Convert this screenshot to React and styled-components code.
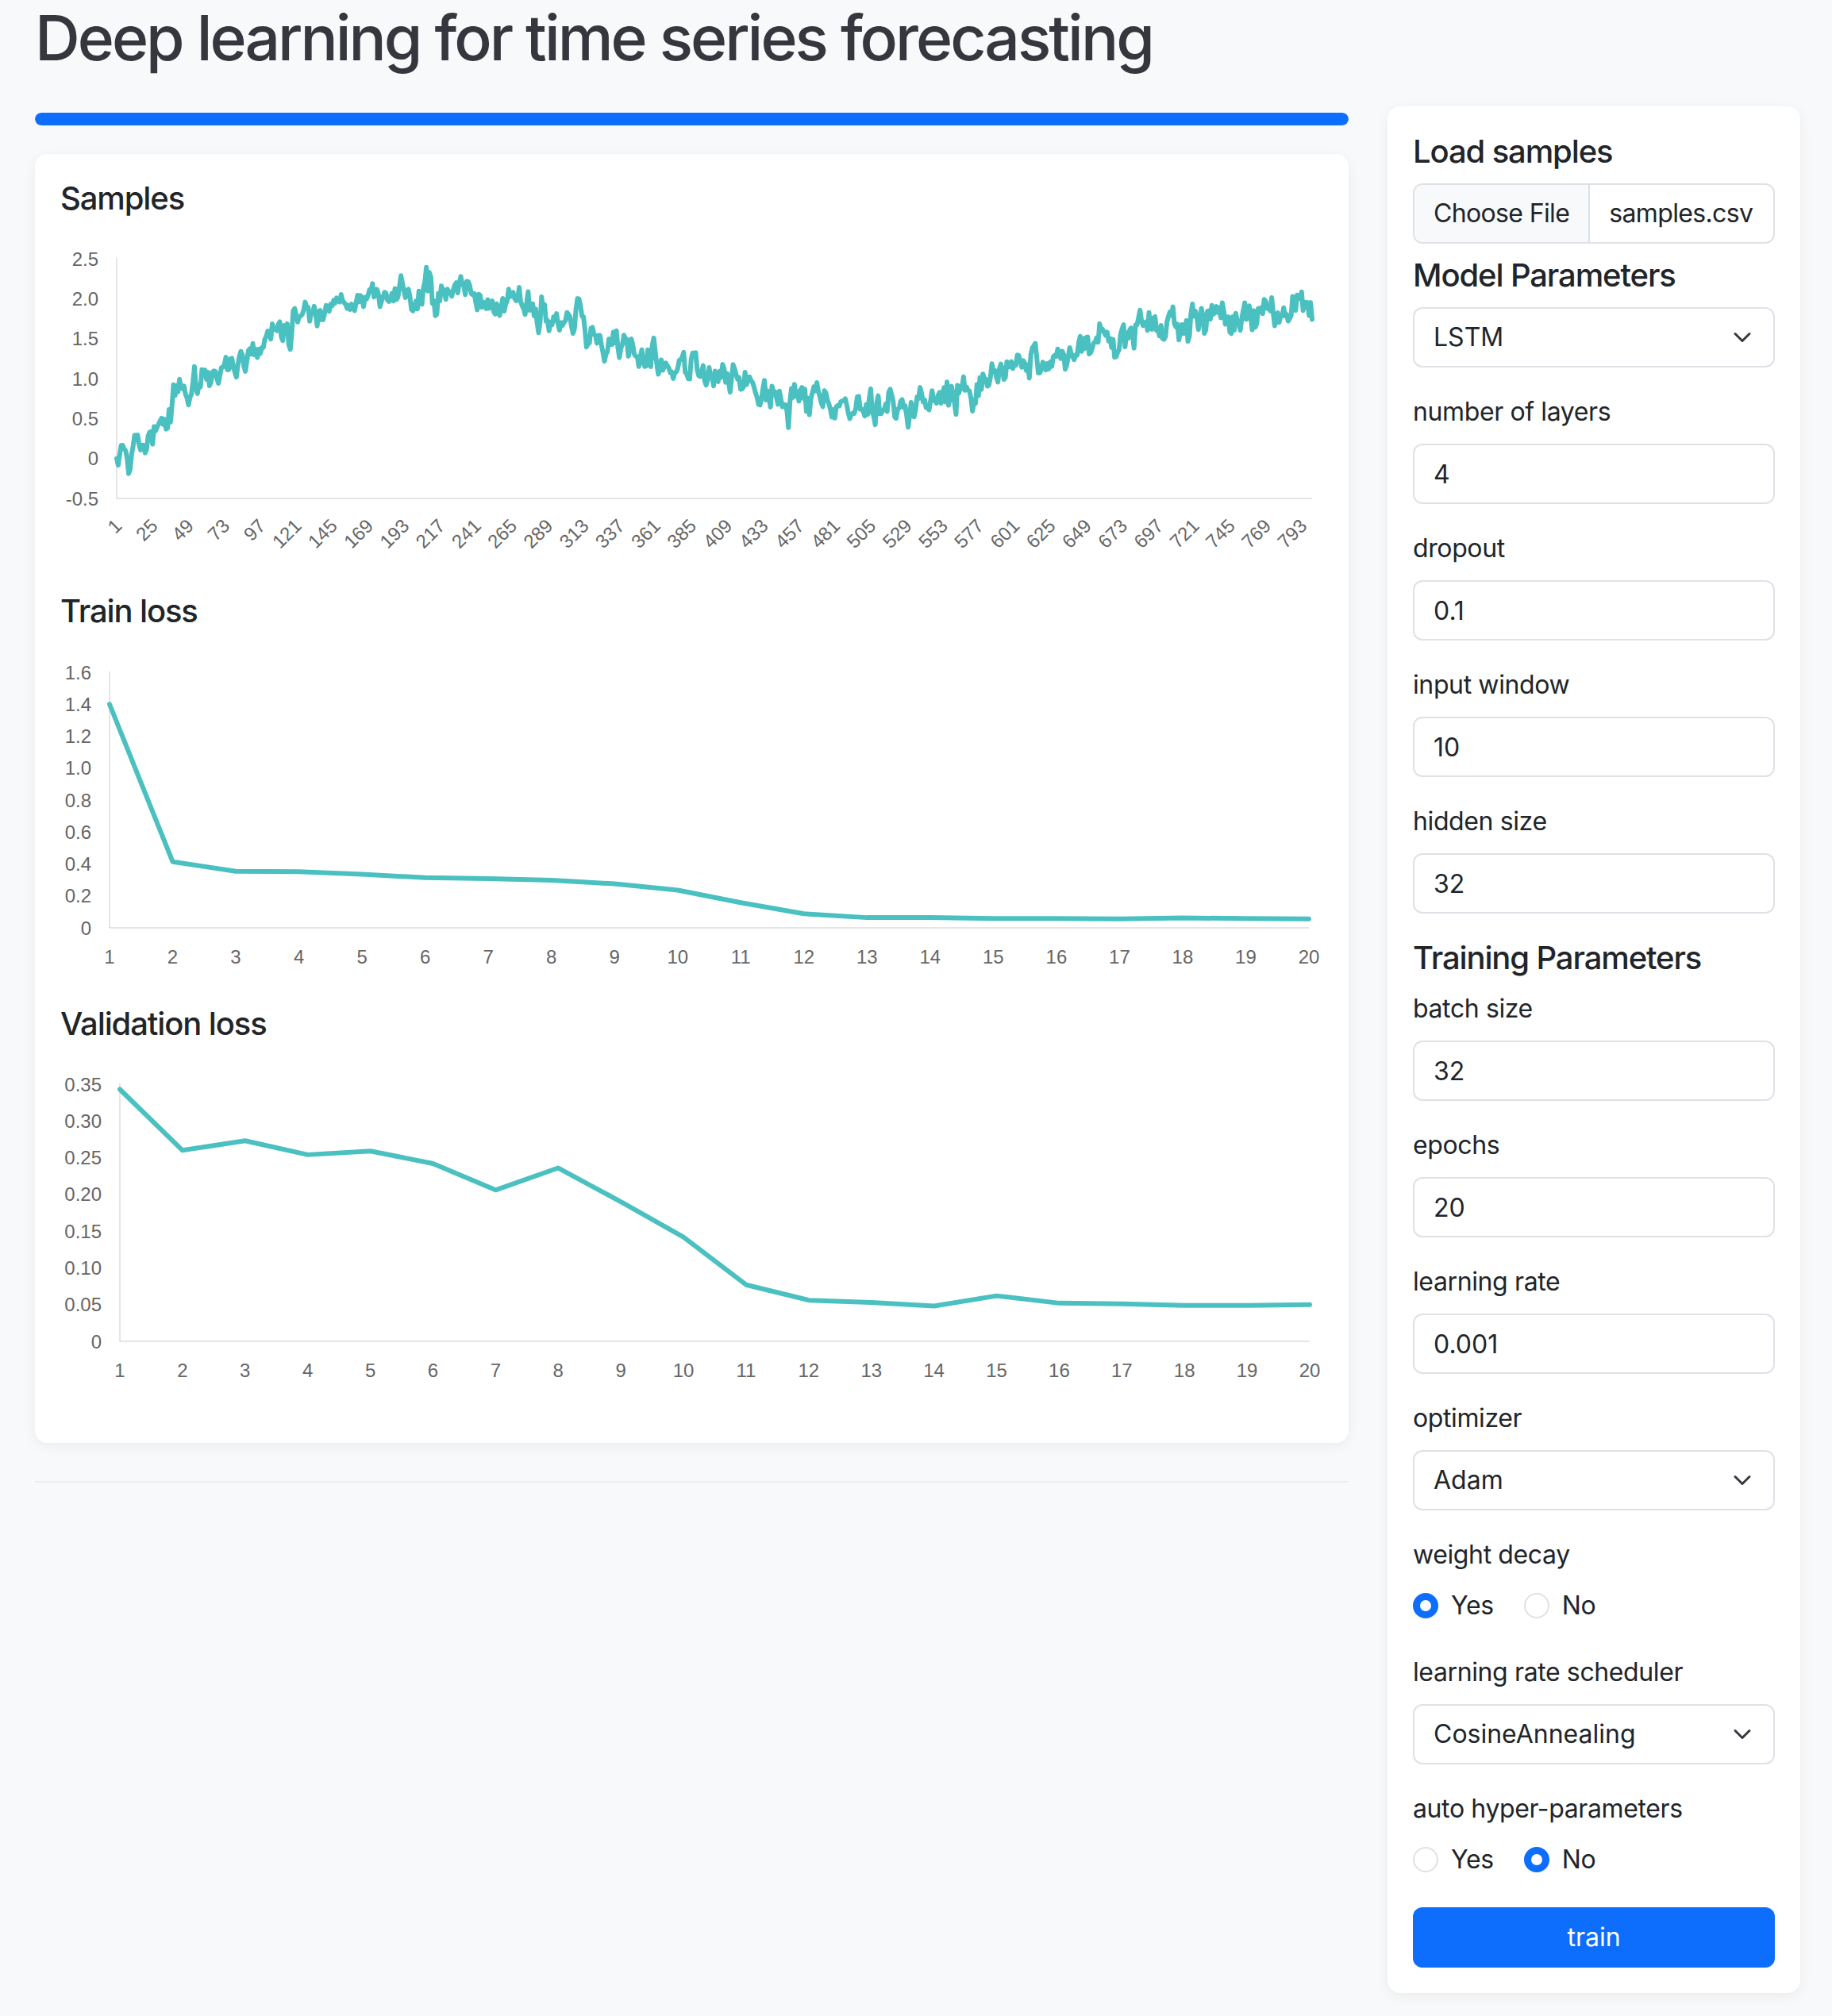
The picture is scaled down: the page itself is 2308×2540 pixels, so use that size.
import React from 'react';
import styled, { createGlobalStyle } from 'styled-components';
import { ChevronDown } from 'lucide-react';

const GlobalStyle = createGlobalStyle`
  * { box-sizing: border-box; }
  html, body {
    margin: 0;
    padding: 0;
    background: #f8f9fa;
  }
  body {
    font-family: Inter, "Noto Sans", "Liberation Sans", sans-serif;
    font-size: 32px;
    line-height: 1.5;
    letter-spacing: -0.012em;
    color: #212529;
  }
`;

const Page = styled.div`
  min-height: 2540px;
  padding: 0 40px 0 44px;
`;

const Title = styled.h1`
  margin: 0;
  font-size: 78.6px;
  font-weight: 500;
  line-height: 96px;
  letter-spacing: -0.038em;
  color: #35363e;
`;

const Layout = styled.div`
  display: grid;
  grid-template-columns: 1655px 520px;
  column-gap: 49px;
  align-items: start;
  margin-top: 38px;
`;

const MainColumn = styled.div`
  padding-top: 8px;
`;

const Progress = styled.div`
  height: 16px;
  border-radius: 8px;
  background: #e9ecef;
  overflow: hidden;
`;

const ProgressBar = styled.div`
  height: 100%;
  width: ${p => p.$value}%;
  background: #0d6efd;
  border-radius: 8px;
`;

const Card = styled.div`
  background: #fff;
  border-radius: 16px;
  box-shadow: 0 4px 16px rgba(0, 0, 0, 0.06);
  padding: 32px;
`;

const ChartCard = styled(Card)`
  margin-top: 36px;
`;

const SectionTitle = styled.h5`
  margin: 0 0 16px;
  font-size: 40px;
  font-weight: 500;
  line-height: 1.2;
  letter-spacing: -0.028em;
  color: #212529;
`;

const Divider = styled.hr`
  margin: 48px 0 0;
  border: 0;
  border-top: 2px solid #eceef0;
`;

/* ---------- charts ---------- */

const ChartSvg = styled.svg`
  display: block;
  width: 1591px;
  height: 456px;
  font-family: "Liberation Sans", Arial, sans-serif;
  letter-spacing: 0;
`;

const AxisLine = styled.line`
  stroke: rgba(0, 0, 0, 0.1);
  stroke-width: 2;
`;

const TickText = styled.text`
  font-size: 24px;
  fill: #666;
  dominant-baseline: central;
`;

const DataLine = styled.polyline`
  fill: none;
  stroke: #4bc0c0;
  stroke-width: 6;
  stroke-linejoin: round;
  stroke-linecap: round;
`;

function LineChart({ data, yMin, yMax, yTicks, xLabels, plot, rotate, labelY }) {
  const { left, right, top, bottom } = plot;
  const n = data.length;
  const px = i => left + (i / (n - 1)) * (right - left);
  const py = v => bottom - ((v - yMin) / (yMax - yMin)) * (bottom - top);
  const points = data.map((v, i) => `${px(i).toFixed(2)},${py(v).toFixed(2)}`).join(' ');

  return (
    <ChartSvg viewBox="0 0 1591 456">
      <AxisLine x1={left} y1={top - 1} x2={left} y2={bottom} />
      <AxisLine x1={left} y1={bottom} x2={right} y2={bottom} />
      {yTicks.map(t => (
        <TickText key={t.label} x={left - 23} y={py(t.value)} textAnchor="end">
          {t.label}
        </TickText>
      ))}
      {xLabels.map(({ index, label }) =>
        rotate ? (
          <TickText
            key={label}
            textAnchor="end"
            transform={`translate(${px(index) + 2}, ${bottom + 30}) rotate(-45)`}
          >
            {label}
          </TickText>
        ) : (
          <TickText key={label} x={px(index)} y={labelY} textAnchor="middle">
            {label}
          </TickText>
        )
      )}
      <DataLine points={points} />
    </ChartSvg>
  );
}

// deterministic noisy wave for the samples chart
function makeSamples() {
  const knots = [
    [0, 0], [12, 0.14], [25, 0.42], [49, 0.84], [73, 1.18], [97, 1.48], [121, 1.76],
    [145, 1.93], [169, 2.04], [193, 2.11], [217, 2.12], [241, 2.05], [265, 1.94],
    [289, 1.78], [313, 1.6], [337, 1.42], [361, 1.24], [385, 1.07], [409, 0.94],
    [433, 0.81], [457, 0.7], [481, 0.63], [505, 0.62], [529, 0.69], [553, 0.82],
    [577, 0.96], [601, 1.12], [625, 1.28], [649, 1.43], [673, 1.57], [697, 1.68],
    [721, 1.77], [745, 1.83], [769, 1.85], [793, 1.84], [799, 1.8],
  ];
  let seed = 20240611;
  const rand = () => {
    seed = (seed + 0x6d2b79f5) | 0;
    let t = Math.imul(seed ^ (seed >>> 15), 1 | seed);
    t = (t + Math.imul(t ^ (t >>> 7), 61 | t)) ^ t;
    return ((t ^ (t >>> 14)) >>> 0) / 4294967296;
  };
  const gauss = () => {
    let s = 0;
    for (let k = 0; k < 4; k++) s += rand();
    return (s - 2) * 1.7;
  };
  const out = [];
  let noise = 0;
  let k = 0;
  for (let i = 0; i < 800; i++) {
    while (k < knots.length - 2 && i > knots[k + 1][0]) k++;
    const [x0, y0] = knots[k];
    const [x1, y1] = knots[k + 1];
    const f = Math.min(1, Math.max(0, (i - x0) / (x1 - x0)));
    const s = f * f * (3 - 2 * f);
    const base = y0 + (y1 - y0) * (0.5 * f + 0.5 * s);
    noise = 0.55 * noise + 0.1 * gauss();
    out.push(i === 0 ? 0 : base + noise);
  }
  return out;
}

const samples = makeSamples();

const trainLoss = [1.4, 0.414, 0.354, 0.352, 0.336, 0.314, 0.308, 0.298, 0.276, 0.236,
  0.158, 0.088, 0.064, 0.064, 0.058, 0.058, 0.056, 0.062, 0.058, 0.056];

const valLoss = [0.343, 0.26, 0.273, 0.254, 0.259, 0.242, 0.206, 0.236, 0.19, 0.142,
  0.077, 0.056, 0.053, 0.048, 0.062, 0.052, 0.051, 0.049, 0.049, 0.05];

const epochLabels = Array.from({ length: 20 }, (_, i) => ({ index: i, label: String(i + 1) }));
const sampleLabels = Array.from({ length: 34 }, (_, i) => ({ index: i * 24, label: String(i * 24 + 1) }));

const sampleTicks = [-0.5, 0, 0.5, 1, 1.5, 2, 2.5].map(v => ({
  value: v,
  label: v === 0 ? '0' : v.toFixed(1),
}));
const trainTicks = [0, 0.2, 0.4, 0.6, 0.8, 1, 1.2, 1.4, 1.6].map(v => ({
  value: v,
  label: v === 0 ? '0' : v.toFixed(1),
}));
const valTicks = [0, 0.05, 0.1, 0.15, 0.2, 0.25, 0.3, 0.35].map(v => ({
  value: v,
  label: v === 0 ? '0' : v.toFixed(2),
}));

/* ---------- sidebar form ---------- */

const Sidebar = styled(Card)`
  padding-top: 33px;
`;

const FileGroup = styled.div`
  display: flex;
  height: 76px;
  border: 2px solid #dee2e6;
  border-radius: 12px;
  overflow: hidden;
  margin-bottom: 16px;
  letter-spacing: -0.02em;
`;

const FileButton = styled.span`
  display: flex;
  align-items: center;
  padding: 0 24px;
  background: #f8f9fa;
  border-right: 2px solid #dee2e6;
`;

const FileName = styled.span`
  display: flex;
  align-items: center;
  padding-left: 24px;
`;

const Field = styled.div`
  display: flow-root;
  margin-bottom: 32px;
`;

const Label = styled.label`
  display: block;
  margin-bottom: 16px;
  line-height: 48px;
`;

const TextInput = styled.input`
  display: block;
  width: 100%;
  height: 76px;
  padding: 0 24px;
  font: inherit;
  color: #212529;
  background: #fff;
  border: 2px solid #dee2e6;
  border-radius: 12px;
  outline: none;
`;

const SelectWrap = styled.div`
  position: relative;
  margin-bottom: ${p => (p.$spaced ? '32px' : '0')};
`;

const SelectBox = styled.select`
  display: block;
  width: 100%;
  height: 76px;
  padding: 0 72px 0 24px;
  font: inherit;
  color: #212529;
  background: #fff;
  border: 2px solid #dee2e6;
  border-radius: 12px;
  appearance: none;
  outline: none;
`;

const Chevron = styled(ChevronDown)`
  position: absolute;
  right: 23px;
  top: 50%;
  transform: translateY(-50%);
  pointer-events: none;
`;

const RadioRow = styled.div`
  display: flex;
  height: 48px;
  margin-bottom: 4px;
`;

const RadioOption = styled.label`
  display: flex;
  align-items: center;
  gap: 16px;
  margin-right: 38px;
`;

const RadioDot = styled.span`
  width: 32px;
  height: 32px;
  border-radius: 50%;
  border: 2px solid ${p => (p.$checked ? '#0d6efd' : '#dee2e6')};
  background: ${p => (p.$checked ? '#0d6efd' : '#fff')};
  display: flex;
  align-items: center;
  justify-content: center;

  &::after {
    content: '';
    width: 14px;
    height: 14px;
    border-radius: 50%;
    background: #fff;
    display: ${p => (p.$checked ? 'block' : 'none')};
  }
`;

const TrainButton = styled.button`
  display: block;
  width: 100%;
  height: 76px;
  font: inherit;
  color: #fff;
  background: #0d6efd;
  border: none;
  border-radius: 12px;
  cursor: pointer;
`;

function InputField({ label, value }) {
  return (
    <Field>
      <Label>{label}</Label>
      <TextInput defaultValue={value} />
    </Field>
  );
}

function SelectControl({ value, options, spaced }) {
  return (
    <SelectWrap $spaced={spaced}>
      <SelectBox defaultValue={value}>
        {options.map(o => (
          <option key={o}>{o}</option>
        ))}
      </SelectBox>
      <Chevron size={36} strokeWidth={2} color="#343a40" />
    </SelectWrap>
  );
}

function RadioField({ label, value }) {
  return (
    <Field>
      <Label>{label}</Label>
      <RadioRow>
        {['Yes', 'No'].map(opt => (
          <RadioOption key={opt}>
            <RadioDot $checked={value === opt} />
            {opt}
          </RadioOption>
        ))}
      </RadioRow>
    </Field>
  );
}

export default function App() {
  return (
    <>
      <GlobalStyle />
      <Page>
        <Title>Deep learning for time series forecasting</Title>
        <Layout>
          <MainColumn>
            <Progress>
              <ProgressBar $value={100} />
            </Progress>
            <ChartCard>
              <SectionTitle>Samples</SectionTitle>
              <LineChart
                data={samples}
                yMin={-0.5}
                yMax={2.5}
                yTicks={sampleTicks}
                xLabels={sampleLabels}
                plot={{ left: 71, right: 1577, top: 36, bottom: 338 }}
                rotate
              />
              <SectionTitle>Train loss</SectionTitle>
              <LineChart
                data={trainLoss}
                yMin={0}
                yMax={1.6}
                yTicks={trainTicks}
                xLabels={epochLabels}
                plot={{ left: 62, right: 1573, top: 37, bottom: 359 }}
                labelY={395}
              />
              <SectionTitle>Validation loss</SectionTitle>
              <LineChart
                data={valLoss}
                yMin={0}
                yMax={0.35}
                yTicks={valTicks}
                xLabels={epochLabels}
                plot={{ left: 75, right: 1574, top: 36, bottom: 360 }}
                labelY={396}
              />
            </ChartCard>
            <Divider />
          </MainColumn>

          <Sidebar>
            <SectionTitle>Load samples</SectionTitle>
            <FileGroup>
              <FileButton>Choose File</FileButton>
              <FileName>samples.csv</FileName>
            </FileGroup>

            <SectionTitle>Model Parameters</SectionTitle>
            <SelectControl value="LSTM" options={['LSTM', 'GRU', 'RNN']} spaced />
            <InputField label="number of layers" value="4" />
            <InputField label="dropout" value="0.1" />
            <InputField label="input window" value="10" />
            <InputField label="hidden size" value="32" />

            <SectionTitle>Training Parameters</SectionTitle>
            <InputField label="batch size" value="32" />
            <InputField label="epochs" value="20" />
            <InputField label="learning rate" value="0.001" />
            <Field>
              <Label>optimizer</Label>
              <SelectControl value="Adam" options={['Adam', 'SGD', 'RMSprop']} />
            </Field>
            <RadioField label="weight decay" value="Yes" />
            <Field>
              <Label>learning rate scheduler</Label>
              <SelectControl
                value="CosineAnnealing"
                options={['CosineAnnealing', 'StepLR', 'None']}
              />
            </Field>
            <RadioField label="auto hyper-parameters" value="No" />
            <TrainButton>train</TrainButton>
          </Sidebar>
        </Layout>
      </Page>
    </>
  );
}
